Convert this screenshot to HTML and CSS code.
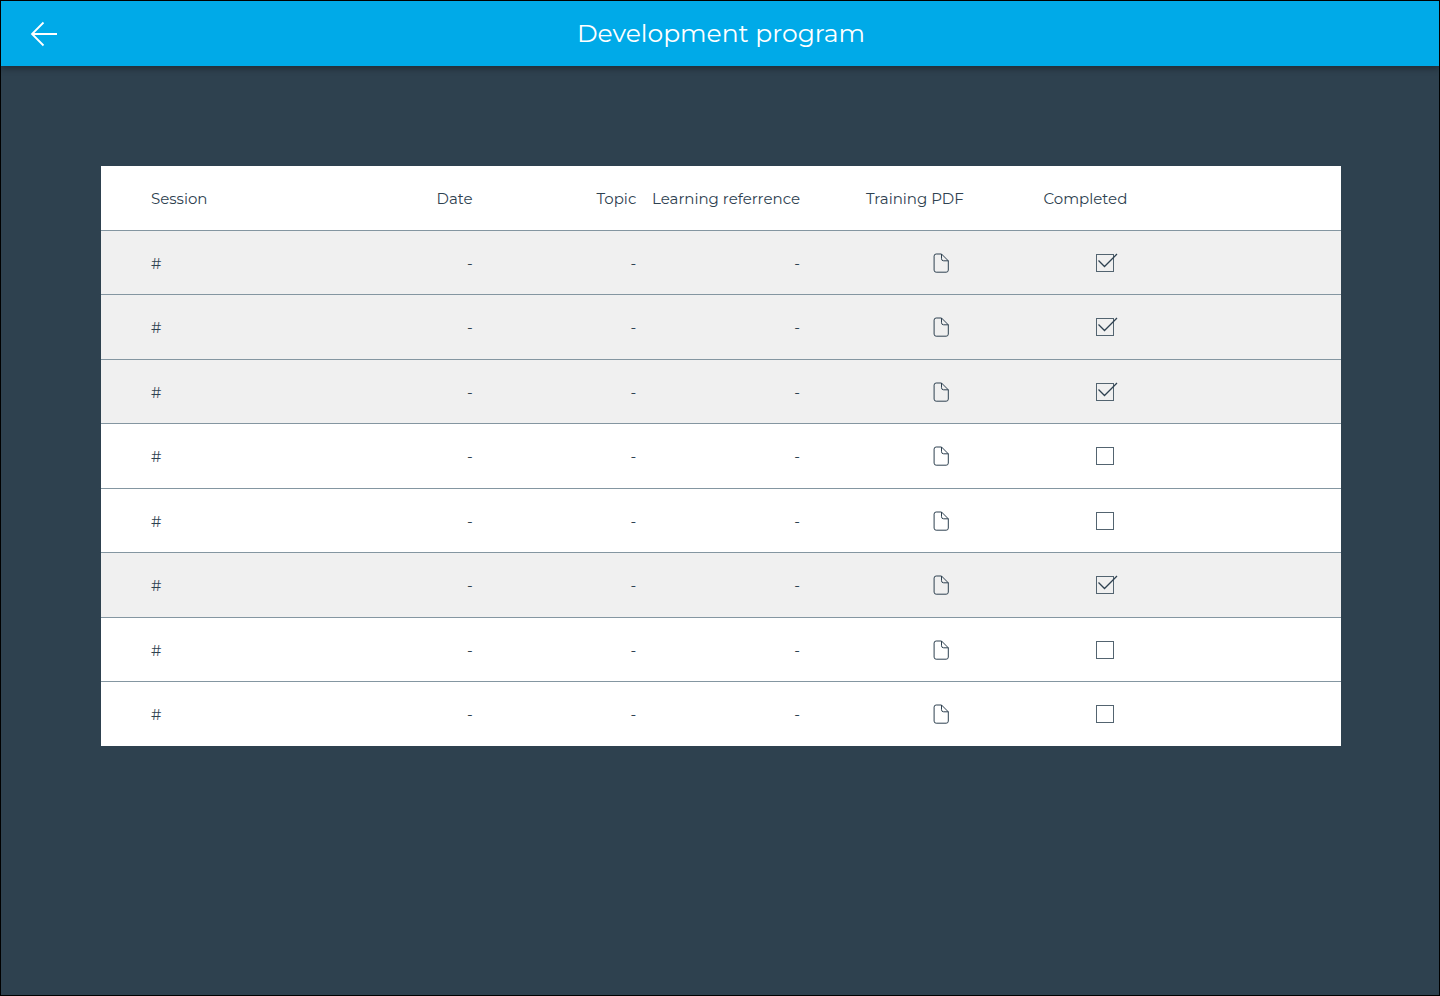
FILE: index.html
```html
<!DOCTYPE html>
<html lang="en">
<head>
<meta charset="utf-8">
<meta name="viewport" content="width=device-width, initial-scale=1">
<title>Development program</title>
<link rel="stylesheet" href="styles.css">
</head>
<body>
<svg class="sprite" aria-hidden="true">
  <symbol id="icon-file" viewBox="0 0 16 20">
    <path d="M8.500 1H3.200A2.100 2.100 0 0 0 1.100 3.100V17.100A2.100 2.100 0 0 0 3.200 19.200H13.200A2.100 2.100 0 0 0 15.300 17.100V7.800L8.500 1V5.700A2.100 2.100 0 0 0 10.600 7.800H15.300" fill="none" stroke="currentColor" stroke-linejoin="round"/>
  </symbol>
  <symbol id="icon-check" viewBox="0 0 22 20">
    <path d="M2.500 7.500L8.500 13.500L21 1" fill="none" stroke="currentColor" stroke-width="1.300"/>
  </symbol>
</svg>
<header class="topbar">
  <button class="back" type="button" aria-label="Back">
    <svg class="back-icon" viewBox="0 0 28 26" aria-hidden="true"><path d="M27 13H2M13.500 1.500L2 13L13.500 24.500" fill="none" stroke="currentColor" stroke-width="1.800"/></svg>
  </button>
  <h1 class="title">Development program</h1>
</header>
<main class="content">
  <table class="sessions">
    <colgroup><col class="col-session"><col class="col-data"><col class="col-data"><col class="col-data"><col class="col-data"><col class="col-data"><col></colgroup>
    <thead>
      <tr><th scope="col">Session</th><th scope="col">Date</th><th scope="col">Topic</th><th scope="col">Learning referrence</th><th scope="col">Training PDF</th><th scope="col">Completed</th><td></td></tr>
    </thead>
    <tbody>
      <tr class="done"><td>#</td><td>-</td><td>-</td><td>-</td><td class="file-cell"><button class="file" type="button" aria-label="Open training PDF"><svg class="file-icon"><use href="#icon-file"/></svg></button></td><td class="check-cell"><label class="check"><input class="box" type="checkbox" aria-label="Completed" checked><svg class="tick"><use href="#icon-check"/></svg></label></td><td></td></tr>
      <tr class="done"><td>#</td><td>-</td><td>-</td><td>-</td><td class="file-cell"><button class="file" type="button" aria-label="Open training PDF"><svg class="file-icon"><use href="#icon-file"/></svg></button></td><td class="check-cell"><label class="check"><input class="box" type="checkbox" aria-label="Completed" checked><svg class="tick"><use href="#icon-check"/></svg></label></td><td></td></tr>
      <tr class="done"><td>#</td><td>-</td><td>-</td><td>-</td><td class="file-cell"><button class="file" type="button" aria-label="Open training PDF"><svg class="file-icon"><use href="#icon-file"/></svg></button></td><td class="check-cell"><label class="check"><input class="box" type="checkbox" aria-label="Completed" checked><svg class="tick"><use href="#icon-check"/></svg></label></td><td></td></tr>
      <tr><td>#</td><td>-</td><td>-</td><td>-</td><td class="file-cell"><button class="file" type="button" aria-label="Open training PDF"><svg class="file-icon"><use href="#icon-file"/></svg></button></td><td class="check-cell"><label class="check"><input class="box" type="checkbox" aria-label="Completed"><svg class="tick"><use href="#icon-check"/></svg></label></td><td></td></tr>
      <tr><td>#</td><td>-</td><td>-</td><td>-</td><td class="file-cell"><button class="file" type="button" aria-label="Open training PDF"><svg class="file-icon"><use href="#icon-file"/></svg></button></td><td class="check-cell"><label class="check"><input class="box" type="checkbox" aria-label="Completed"><svg class="tick"><use href="#icon-check"/></svg></label></td><td></td></tr>
      <tr class="done"><td>#</td><td>-</td><td>-</td><td>-</td><td class="file-cell"><button class="file" type="button" aria-label="Open training PDF"><svg class="file-icon"><use href="#icon-file"/></svg></button></td><td class="check-cell"><label class="check"><input class="box" type="checkbox" aria-label="Completed" checked><svg class="tick"><use href="#icon-check"/></svg></label></td><td></td></tr>
      <tr><td>#</td><td>-</td><td>-</td><td>-</td><td class="file-cell"><button class="file" type="button" aria-label="Open training PDF"><svg class="file-icon"><use href="#icon-file"/></svg></button></td><td class="check-cell"><label class="check"><input class="box" type="checkbox" aria-label="Completed"><svg class="tick"><use href="#icon-check"/></svg></label></td><td></td></tr>
      <tr><td>#</td><td>-</td><td>-</td><td>-</td><td class="file-cell"><button class="file" type="button" aria-label="Open training PDF"><svg class="file-icon"><use href="#icon-file"/></svg></button></td><td class="check-cell"><label class="check"><input class="box" type="checkbox" aria-label="Completed"><svg class="tick"><use href="#icon-check"/></svg></label></td><td></td></tr>
    </tbody>
  </table>
</main>
</body>
</html>
```
FILE: styles.css
```css
* { box-sizing: border-box; }

body {
  margin: 0;
  min-height: 100vh;
  border: 1px solid #000;
  background: #2e414f;
  color: #2e4150;
  font: 400 15px/20px Montserrat, Inter, sans-serif;
}

.sprite { position: absolute; width: 0; height: 0; }

.topbar {
  display: grid;
  grid-template-columns: 86px 1fr 84px;
  align-items: center;
  height: 65px;
  background: #00aae8;
  color: #fff;
  box-shadow: 0 3px 6px rgba(0, 0, 0, 0.3);
}

.back {
  justify-self: center;
  display: flex;
  padding: 0;
  border: 0;
  background: none;
  color: inherit;
  cursor: pointer;
}

.back-icon { width: 28px; height: 26px; }

.title {
  margin: 0;
  padding-bottom: 2px;
  font-size: 25px;
  line-height: 36px;
  font-weight: 400;
  text-align: center;
}

.content { padding: 100px 98px 48px 100px; }

.sessions {
  width: 100%;
  table-layout: fixed;
  border-spacing: 0;
  background: #fff;
}

.col-session { width: 208px; }
.col-data { width: 13.2%; }

.sessions th,
.sessions td {
  height: 64px;
  padding: 2px 0 0;
  border-bottom: 1px solid #8496a1;
  font-weight: 400;
  text-align: right;
  vertical-align: middle;
  white-space: nowrap;
}

.sessions th,
.sessions tr:nth-child(even) td { height: 65px; }
.sessions tbody tr:last-child td { height: 64px; border-bottom: 0; }

.sessions th:first-child,
.sessions td:first-child { padding-left: 50px; text-align: left; }

.done { background: #f0f0f0; }

.sessions .file-cell { padding: 0 15px 0 0; }
.sessions .check-cell { padding: 0 9px 0 0; }

.file {
  display: block;
  margin-left: auto;
  padding: 0;
  border: 0;
  background: none;
  color: inherit;
  cursor: pointer;
}

.file-icon { display: block; width: 16px; height: 20px; }

.check {
  position: relative;
  display: block;
  width: 22px;
  height: 18px;
  margin-left: auto;
}

.box {
  appearance: none;
  display: block;
  width: 18px;
  height: 18px;
  margin: 0;
  border: 1px solid #536470;
}

.tick {
  position: absolute;
  top: -1px;
  left: 0;
  display: none;
  width: 22px;
  height: 20px;
  pointer-events: none;
}

.box:checked + .tick { display: block; }
```
